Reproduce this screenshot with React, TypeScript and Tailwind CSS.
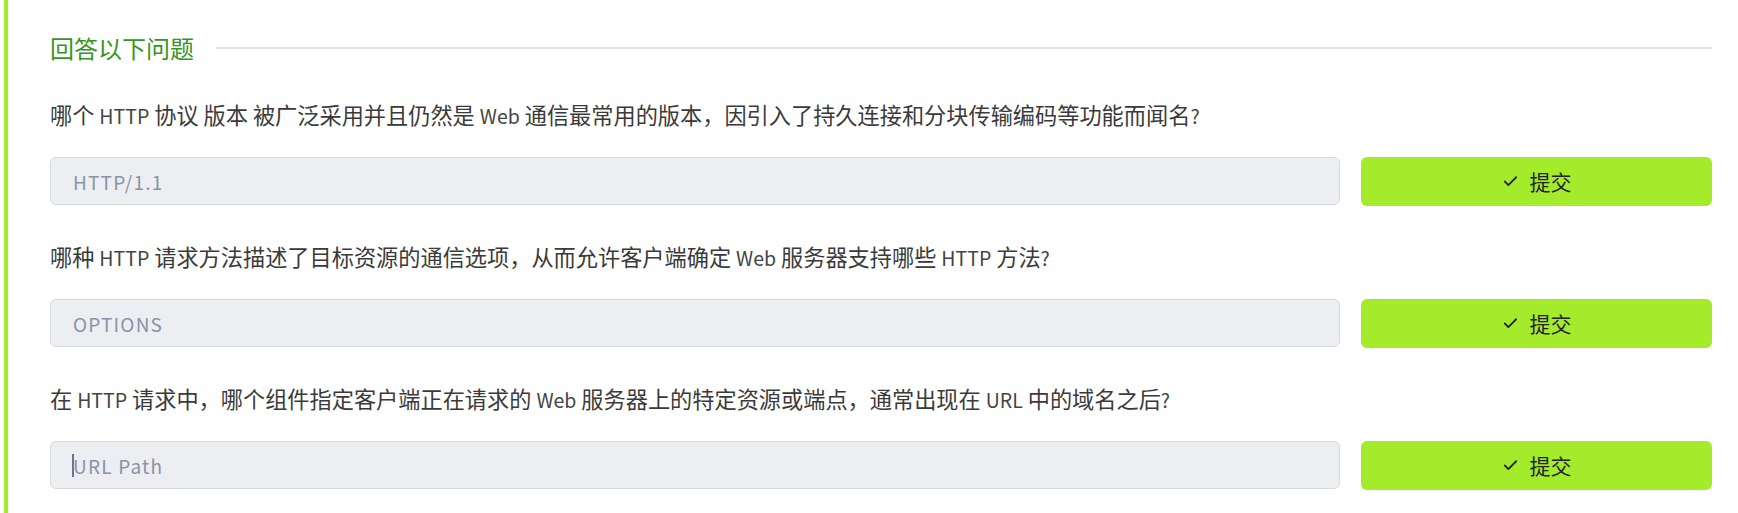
import React, { useState } from "react";
import { Check } from "lucide-react";

type Question = {
  text: string;
  value: string;
  placeholder: string;
};

const questions: Question[] = [
  {
    text: "哪个 HTTP 协议 版本 被广泛采用并且仍然是 Web 通信最常用的版本，因引入了持久连接和分块传输编码等功能而闻名?",
    value: "HTTP/1.1",
    placeholder: "",
  },
  {
    text: "哪种 HTTP 请求方法描述了目标资源的通信选项，从而允许客户端确定 Web 服务器支持哪些 HTTP 方法?",
    value: "OPTIONS",
    placeholder: "",
  },
  {
    text: "在 HTTP 请求中，哪个组件指定客户端正在请求的 Web 服务器上的特定资源或端点，通常出现在 URL 中的域名之后?",
    value: "",
    placeholder: "URL Path",
  },
];

// latin words render a little smaller and lighter than the CJK glyphs
const renderMixed = (text: string) =>
  text.split(/([A-Za-z0-9/.?]+)/).map((part, i) =>
    /^[A-Za-z0-9/.?]+$/.test(part) ? (
      <span key={i} className="text-[19.5px] leading-none text-[#444444]">
        {part}
      </span>
    ) : (
      <React.Fragment key={i}>{part}</React.Fragment>
    )
  );

const QuestionRow: React.FC<{ q: Question; last: boolean }> = ({ q, last }) => {
  const [answer, setAnswer] = useState(q.value);

  return (
    <div className={last ? "" : "mb-[35px]"}>
      <p className="text-[22.2px] leading-[30px] text-[#3a3a3a] mb-[28px]">{renderMixed(q.text)}</p>
      <div className="flex items-start gap-[21px]">
        <div className="relative flex-1">
          <input
            type="text"
            value={answer}
            placeholder={q.placeholder}
            onChange={(e) => setAnswer(e.target.value)}
            className="w-full h-[48px] px-[22px] rounded-md border border-[#d6d9df] bg-[#eceef2] text-[19px] tracking-[1.2px] text-[#8a93a6] placeholder:text-[#8a93a6] caret-[#6b7591] outline-none"
          />
          {/* caret shown in the focused, empty field */}
          {last && answer === "" && (
            <span className="absolute left-[22px] top-[13px] w-[2px] h-[23px] bg-[#6b7591] pointer-events-none" />
          )}
        </div>
        <button
          type="button"
          className="w-[351px] h-[49px] flex items-center justify-center gap-[11px] rounded-md bg-[#a4eb2b] text-[#222222] text-[21px] hover:bg-[#98de22]"
        >
          <Check className="w-[17px] h-[17px]" strokeWidth={2.5} />
          <span>提交</span>
        </button>
      </div>
    </div>
  );
};

export default function App() {
  return (
    <div
      className="min-h-[513px] bg-white pl-[4px]"
      style={{ fontFamily: '"Noto Sans CJK SC", "Noto Sans", sans-serif' }}
    >
      <div className="min-h-[513px] border-l-4 border-[#a4eb2b] pl-[42px] pr-[26px] pt-[32px] pb-[24px]">
        <div className="flex items-center gap-[22px] mb-[35px]">
          <h2 className="text-[24px] leading-[32px] text-[#35961f] shrink-0">回答以下问题</h2>
          <div className="flex-1 h-[2px] bg-[#dfe1e6]" />
        </div>
        {questions.map((q, i) => (
          <QuestionRow key={i} q={q} last={i === questions.length - 1} />
        ))}
      </div>
    </div>
  );
}
